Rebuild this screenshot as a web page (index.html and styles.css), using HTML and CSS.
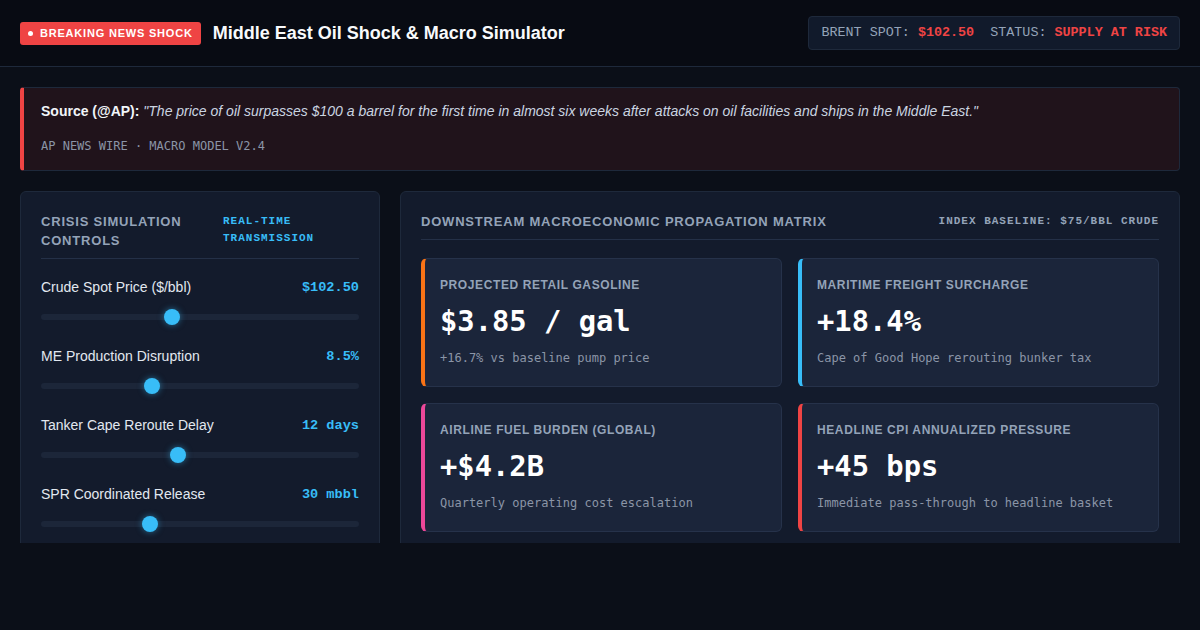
FILE: index.html
```html
<!DOCTYPE html>
<html lang="en">
<head>
    <meta charset="UTF-8">
    <meta name="viewport" content="width=device-width, initial-scale=1.0">
    <title>Middle East Oil Shock &amp; Macro Simulator</title>
    <link rel="stylesheet" href="styles.css">
</head>
<body>
    <header class="topbar">
        <div class="brand">
            <span class="badge"><span class="badge-dot"></span>BREAKING NEWS SHOCK</span>
            <h1>Middle East Oil Shock &amp; Macro Simulator</h1>
        </div>
        <div class="ticker">BRENT SPOT: <strong>$102.50</strong>&nbsp;&nbsp;STATUS: <strong>SUPPLY AT RISK</strong></div>
    </header>

    <main class="page">
        <div class="source">
            <p><strong>Source (@AP):</strong> <em>"The price of oil surpasses $100 a barrel for the first time in almost six weeks after attacks on oil facilities and ships in the Middle East."</em></p>
            <div class="source-meta">AP NEWS WIRE · MACRO MODEL V2.4</div>
        </div>

        <div class="workspace">
            <section class="panel">
                <div class="panel-head">
                    <h2>Crisis Simulation Controls</h2>
                    <span class="panel-tag">REAL-TIME TRANSMISSION</span>
                </div>

                <div class="control">
                    <div class="control-row">
                        <label for="crude">Crude Spot Price ($/bbl)</label>
                        <span class="control-value">$102.50</span>
                    </div>
                    <input type="range" id="crude" min="70" max="150" step="0.5" value="102.5">
                </div>
                <div class="control">
                    <div class="control-row">
                        <label for="disruption">ME Production Disruption</label>
                        <span class="control-value">8.5%</span>
                    </div>
                    <input type="range" id="disruption" min="0" max="25" step="0.5" value="8.5">
                </div>
                <div class="control">
                    <div class="control-row">
                        <label for="reroute">Tanker Cape Reroute Delay</label>
                        <span class="control-value">12 days</span>
                    </div>
                    <input type="range" id="reroute" min="0" max="28" step="1" value="12">
                </div>
                <div class="control">
                    <div class="control-row">
                        <label for="spr">SPR Coordinated Release</label>
                        <span class="control-value">30 mbbl</span>
                    </div>
                    <input type="range" id="spr" min="0" max="90" step="5" value="30">
                </div>
            </section>

            <section class="panel">
                <div class="panel-head">
                    <h2>Downstream Macroeconomic Propagation Matrix</h2>
                    <span class="panel-note">INDEX BASELINE: $75/BBL CRUDE</span>
                </div>

                <div class="metrics">
                    <div class="metric metric-gas">
                        <div class="metric-label">Projected Retail Gasoline</div>
                        <div class="metric-value">$3.85 / gal</div>
                        <div class="metric-note">+16.7% vs baseline pump price</div>
                    </div>
                    <div class="metric metric-freight">
                        <div class="metric-label">Maritime Freight Surcharge</div>
                        <div class="metric-value">+18.4%</div>
                        <div class="metric-note">Cape of Good Hope rerouting bunker tax</div>
                    </div>
                    <div class="metric metric-air">
                        <div class="metric-label">Airline Fuel Burden (Global)</div>
                        <div class="metric-value">+$4.2B</div>
                        <div class="metric-note">Quarterly operating cost escalation</div>
                    </div>
                    <div class="metric metric-cpi">
                        <div class="metric-label">Headline CPI Annualized Pressure</div>
                        <div class="metric-value">+45 bps</div>
                        <div class="metric-note">Immediate pass-through to headline basket</div>
                    </div>
                </div>
            </section>
        </div>
    </main>
</body>
</html>
```

FILE: styles.css
```css
body {
    margin: 0;
    font-family: "Liberation Sans", Arial, sans-serif;
    background-color: #0b0f18;
    color: #e2e8f0;
}
.topbar {
    display: flex;
    justify-content: space-between;
    align-items: center;
    padding: 16px 20px 16px;
    background: #080b13;
    border-bottom: 1px solid #1e293b;
}
.brand {
    display: flex;
    align-items: center;
    gap: 12px;
}
.badge {
    display: flex;
    align-items: center;
    gap: 7px;
    height: 23px;
    padding: 0 8px;
    background: #ef4444;
    color: #fff;
    border-radius: 3px;
    font-size: 11px;
    font-weight: bold;
    letter-spacing: 0.8px;
}
.badge-dot {
    width: 5px;
    height: 5px;
    border-radius: 50%;
    background: #fff;
}
h1 {
    margin: 0;
    font-size: 18px;
    color: #f8fafc;
}
.ticker {
    padding: 8px 12px;
    background: #111a2b;
    border: 1px solid #1e293b;
    border-radius: 4px;
    font-family: "Liberation Mono", "Courier New", monospace;
    font-size: 13.4px;
    line-height: 16px;
    color: #94a3b8;
}
.ticker strong {
    color: #ef4444;
}
.page {
    padding: 20px;
}
.source {
    padding: 12px 20px 15px 17px;
    background: rgba(239, 68, 68, 0.09);
    border: 1px solid #1e293b;
    border-left: 4px solid #ef4444;
    border-radius: 4px;
}
.source p {
    margin: 0;
    font-size: 14px;
    line-height: 22px;
    color: #cbd5e1;
}
.source strong {
    color: #f1f5f9;
}
.source-meta {
    margin-top: 15px;
    font-family: "DejaVu Sans Mono", monospace;
    font-size: 12px;
    line-height: 18px;
    color: #8b95a7;
}
.workspace {
    display: grid;
    grid-template-columns: 360px 1fr;
    gap: 20px;
    margin-top: 20px;
    height: 352px;
    overflow: hidden;
}
.panel {
    padding: 20px;
    background: #131b2c;
    border: 1px solid #1e293b;
    border-radius: 6px;
}
.panel-head {
    display: flex;
    justify-content: space-between;
    gap: 12px;
    padding-bottom: 8px;
    margin-bottom: 18px;
    border-bottom: 1px solid #243047;
}
.panel-head h2 {
    flex: 1;
    margin: 0;
    font-size: 13px;
    line-height: 19px;
    letter-spacing: 0.8px;
    text-transform: uppercase;
    color: #94a3b8;
}
.panel-tag {
    flex: 0 0 136px;
    font-family: "Liberation Mono", "Courier New", monospace;
    font-size: 11px;
    font-weight: bold;
    line-height: 17px;
    letter-spacing: 1px;
    color: #38bdf8;
    padding-top: 1px;
}
.panel-note {
    font-family: "Liberation Mono", "Courier New", monospace;
    font-size: 11px;
    font-weight: bold;
    line-height: 19px;
    letter-spacing: 1px;
    color: #94a3b8;
}
.control {
    margin-bottom: 21px;
}
.control-row {
    display: flex;
    justify-content: space-between;
    align-items: center;
    height: 20px;
}
.control-row label {
    font-size: 14px;
    color: #e2e8f0;
}
.control-value {
    font-family: "Liberation Mono", "Courier New", monospace;
    font-size: 13.6px;
    font-weight: bold;
    color: #38bdf8;
}
.control input[type="range"] {
    -webkit-appearance: none;
    appearance: none;
    display: block;
    width: 100%;
    height: 16px;
    margin: 12px 0 0;
    background: transparent;
}
.control input[type="range"]::-webkit-slider-runnable-track {
    height: 6px;
    background: #1c2639;
    border-radius: 3px;
}
.control input[type="range"]::-webkit-slider-thumb {
    -webkit-appearance: none;
    width: 16px;
    height: 16px;
    margin-top: -5px;
    border-radius: 50%;
    background: #38bdf8;
    box-shadow: 0 0 6px rgba(56, 189, 248, 0.5);
}
.metrics {
    display: grid;
    grid-template-columns: 1fr 1fr;
    gap: 16px;
}
.metric {
    padding: 18px 16px 20px 15px;
    background: #1b253a;
    border: 1px solid #26324a;
    border-left: 4px solid #f97316;
    border-radius: 6px;
}
.metric-freight { border-left-color: #38bdf8; }
.metric-air { border-left-color: #ec4899; }
.metric-cpi { border-left-color: #ef4444; }
.metric-label {
    font-size: 12px;
    font-weight: bold;
    line-height: 16px;
    letter-spacing: 0.6px;
    text-transform: uppercase;
    color: #94a3b8;
}
.metric-value {
    margin: 11px 0 12px;
    font-family: "DejaVu Sans Mono", monospace;
    font-size: 28.8px;
    font-weight: bold;
    line-height: 34px;
    color: #fff;
}
.metric-note {
    font-family: "DejaVu Sans Mono", monospace;
    font-size: 12px;
    line-height: 16px;
    color: #8b95a7;
}
```
